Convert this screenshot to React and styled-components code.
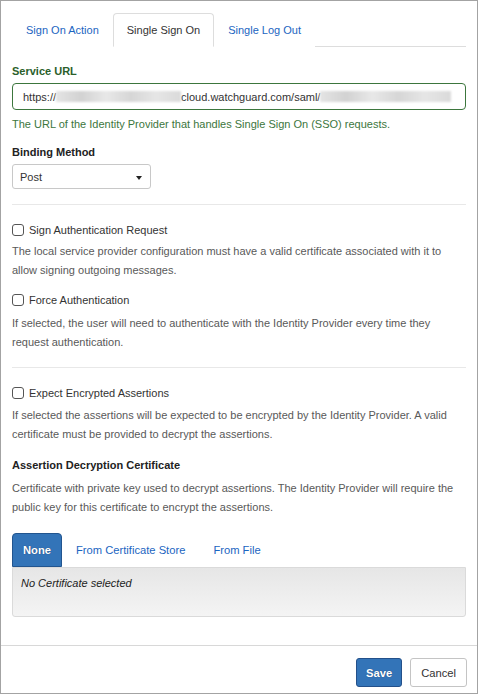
import styled, { createGlobalStyle } from "styled-components";

const GlobalStyle = createGlobalStyle`
  html, body {
    margin: 0;
    padding: 0;
    background: #fff;
  }
  body {
    font-family: "Liberation Sans", Arial, sans-serif;
    font-size: 11px;
    color: #333;
  }
  * {
    box-sizing: border-box;
  }
`;

const Frame = styled.div`
  width: 478px;
  height: 694px;
  border: 1px solid #a3a3a3;
  display: flex;
  flex-direction: column;
`;

const Body = styled.div`
  flex: 1;
  padding: 12px 11px 0 11px;
`;

const TabBar = styled.div`
  display: flex;
  border-bottom: 1px solid #ddd;
  height: 34px;
`;

const Tab = styled.div`
  padding: 0 13px 0 ${(p) => (p.$active ? 13 : 13)}px;
  display: flex;
  align-items: center;
  height: 34px;
  font-size: 11px;
  color: ${(p) => (p.$active ? "#333" : "#1b65c1")};
  background: #fff;
  border: 1px solid ${(p) => (p.$active ? "#ddd" : "transparent")};
  border-bottom-color: ${(p) => (p.$active ? "#fff" : "transparent")};
  border-radius: 4px 4px 0 0;
  margin-bottom: -1px;
`;

const Label = styled.div`
  font-weight: bold;
  color: ${(p) => (p.$success ? "#2b5f2b" : "#222")};
  line-height: 16px;
  margin-top: ${(p) => p.$top || 0}px;
  margin-bottom: 4px;
`;

const Input = styled.div`
  height: 27px;
  border: 1px solid #3c763d;
  border-radius: 4px;
  display: flex;
  align-items: center;
  padding: 0 10px;
  color: #333;
  white-space: nowrap;
  overflow: hidden;
`;

const Blur = styled.span`
  display: inline-block;
  flex: none;
  width: ${(p) => p.$w}px;
  height: 11px;
  background: linear-gradient(90deg, #e4e4e4, #d2d2d2 20%, #e8e8e8 40%, #d6d6d6 60%, #e6e6e6 80%, #dadada);
  filter: blur(1px);
`;

const Help = styled.div`
  color: #3c763d;
  line-height: 18px;
  margin-top: 5px;
`;

const Select = styled.div`
  width: 139px;
  height: 25px;
  border: 1px solid #c8c8c8;
  border-radius: 3px;
  display: flex;
  align-items: center;
  justify-content: space-between;
  padding: 0 8px 0 7px;
  color: #333;
`;

const Caret = styled.span`
  width: 0;
  height: 0;
  border-left: 3.5px solid transparent;
  border-right: 3.5px solid transparent;
  border-top: 4px solid #222;
  margin-top: 2px;
`;

const Rule = styled.hr`
  border: 0;
  border-top: 1px solid #e8e8e8;
  margin: ${(p) => p.$top}px 0 0;
`;

const CheckRow = styled.label`
  display: flex;
  align-items: center;
  gap: 5px;
  line-height: 18px;
  margin-top: ${(p) => p.$top}px;
  color: #333;
`;

const Box = styled.span`
  width: 12px;
  height: 12px;
  border: 1px solid #555;
  border-radius: 3px;
  background: #fff;
`;

const Desc = styled.p`
  margin: ${(p) => p.$top}px 0 0;
  line-height: 19px;
  color: #595959;
`;

const Pills = styled.div`
  display: flex;
  align-items: stretch;
  margin-top: 16px;
  height: 34px;
`;

const Pill = styled.div`
  display: flex;
  align-items: center;
  padding: 0 ${(p) => (p.$active ? 10 : 13)}px;
  border-radius: 4px 4px 0 0;
  border: 1px solid ${(p) => (p.$active ? "#22558f" : "transparent")};
  background: ${(p) => (p.$active ? "#3374b8" : "transparent")};
  color: ${(p) => (p.$active ? "#fff" : "#1b65c1")};
  font-size: 11.2px;
  font-weight: ${(p) => (p.$active ? "bold" : "normal")};
  text-shadow: ${(p) => (p.$active ? "0 0 1px #1a3f6e" : "none")};
`;

const Well = styled.div`
  height: 50px;
  border: 1px solid #dadada;
  border-radius: 0 0 3px 3px;
  background: linear-gradient(#e6e6e6, #f4f4f4);
  padding: 9px 8px;
  font-style: italic;
  color: #222;
`;

const Footer = styled.div`
  border-top: 1px solid #d8d8d8;
  padding: 12px 10px 0 0;
  height: 48px;
  display: flex;
  justify-content: flex-end;
  align-items: flex-start;
  gap: 8px;
`;

const Button = styled.button`
  font-family: inherit;
  font-size: 11.2px;
  height: 29px;
  padding: 0 ${(p) => (p.$primary ? 9 : 10)}px;
  border-radius: 3px;
  border: 1px solid ${(p) => (p.$primary ? "#23508a" : "#c4c4c4")};
  background: ${(p) => (p.$primary ? "#3374b8" : "#fff")};
  color: ${(p) => (p.$primary ? "#fff" : "#333")};
  font-weight: ${(p) => (p.$primary ? "bold" : "normal")};
  text-shadow: ${(p) => (p.$primary ? "0 0 1px #1a3f6e" : "none")};
`;

function Check({ top, children }) {
  return (
    <CheckRow $top={top}>
      <Box />
      {children}
    </CheckRow>
  );
}

export default function App() {
  return (
    <>
      <GlobalStyle />
      <Frame>
        <Body>
          <TabBar>
            <Tab>Sign On Action</Tab>
            <Tab $active>Single Sign On</Tab>
            <Tab>Single Log Out</Tab>
          </TabBar>

          <Label $success $top={16}>Service URL</Label>
          <Input>
            https://
            <Blur $w={125} />
            cloud.watchguard.com/saml/
            <Blur $w={131} />
          </Input>
          <Help>The URL of the Identity Provider that handles Single Sign On (SSO) requests.</Help>

          <Label $top={11}>Binding Method</Label>
          <Select>
            Post
            <Caret />
          </Select>

          <Rule $top={15} />
          <Check top={16}>Sign Authentication Request</Check>
          <Desc $top={3}>
            The local service provider configuration must have a valid certificate associated with it to
            allow signing outgoing messages.
          </Desc>
          <Check top={11}>Force Authentication</Check>
          <Desc $top={5}>
            If selected, the user will need to authenticate with the Identity Provider every time they
            request authentication.
          </Desc>

          <Rule $top={15} />
          <Check top={16}>Expect Encrypted Assertions</Check>
          <Desc $top={4}>
            If selected the assertions will be expected to be encrypted by the Identity Provider. A valid
            certificate must be provided to decrypt the assertions.
          </Desc>
          <Label $top={13}>Assertion Decryption Certificate</Label>
          <Desc $top={6}>
            Certificate with private key used to decrypt assertions. The Identity Provider will require the
            public key for this certificate to encrypt the assertions.
          </Desc>

          <Pills>
            <Pill $active>None</Pill>
            <Pill>From Certificate Store</Pill>
            <Pill>From File</Pill>
          </Pills>
          <Well>No Certificate selected</Well>
        </Body>
        <Footer>
          <Button $primary>Save</Button>
          <Button>Cancel</Button>
        </Footer>
      </Frame>
    </>
  );
}
